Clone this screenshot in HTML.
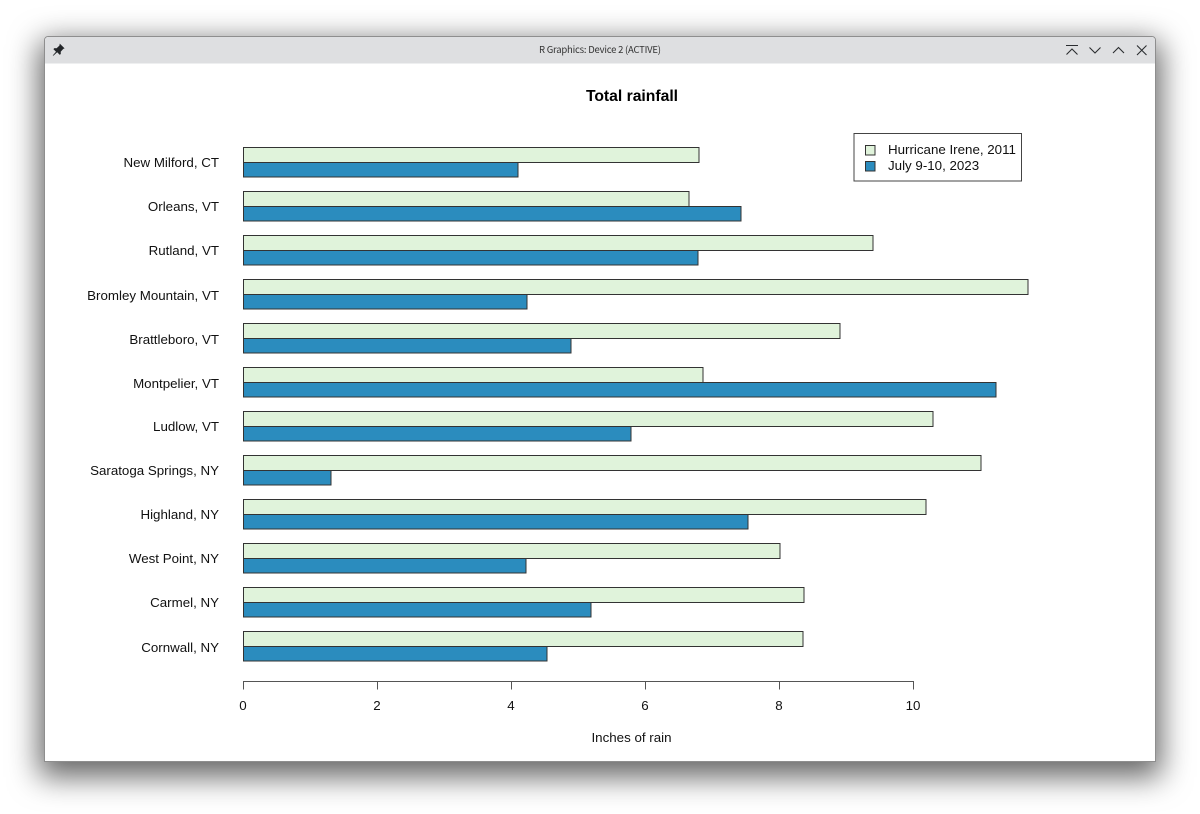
<!DOCTYPE html>
<html>
<head>
<meta charset="utf-8">
<style>
html,body{margin:0;padding:0;background:#fff;width:1200px;height:814px;overflow:hidden}
#win{position:absolute;left:44px;top:36px;width:1112px;height:726px;border-radius:4px 4px 0 0;box-shadow:0 10px 30px 5px rgba(0,0,0,.6)}
svg{position:absolute;left:0;top:0}
text{font-family:"Liberation Sans",sans-serif;fill:#111}
</style>
</head>
<body>
<div id="win"></div>
<svg width="1200" height="814" viewBox="0 0 1200 814">
<path d="M44.500 761.500V40a3.500 3.500 0 0 1 3.500-3.500H1152a3.500 3.500 0 0 1 3.500 3.500V761.500Z" fill="#fff" stroke="#8e8e8e"/>
<path d="M45 63.500V40.500a3.500 3.500 0 0 1 3.500-3.500H1151.500a3.500 3.500 0 0 1 3.500 3.500V63.500Z" fill="#dedfe1"/>
<!-- pin -->
<path d="M59.800 43.600l4.800 4.800-1.300.5-2.600 2.800.1 2.200-1 1-2.600-2.600-3.700 3.300-.8-.1 3.300-3.800-2.600-2.600 1-1 2.200.1 2.800-2.600z" fill="#232629"/>
<text x="539" y="53" font-size="9.500" style="font-family:'Noto Sans CJK JP',sans-serif;fill:#333" textLength="122">R Graphics: Device 2 (ACTIVE)</text>
<!-- window buttons -->
<g fill="none" stroke="#2a2d30" stroke-width="1.100">
<path d="M1066 45.500H1078M1066.500 54.500L1072 49L1077.500 54.500"/>
<path d="M1089.500 47.500L1095 53L1100.500 47.500"/>
<path d="M1113 53L1118.500 47.500L1124 53"/>
<path d="M1137 45.500L1146.500 55M1146.500 45.500L1137 55"/>
</g>
<text x="632" y="101" font-size="15.700" font-weight="bold" text-anchor="middle" style="fill:#000">Total rainfall</text>
<g stroke="#333" stroke-width="1">
<rect x="243.500" y="147.500" width="455.500" height="15" fill="#e0f3db"/><rect x="243.500" y="162.500" width="274.500" height="14.500" fill="#2b8cbe"/>
<rect x="243.500" y="191.500" width="445.500" height="15" fill="#e0f3db"/><rect x="243.500" y="206.500" width="497.500" height="14.500" fill="#2b8cbe"/>
<rect x="243.500" y="235.500" width="629.500" height="15" fill="#e0f3db"/><rect x="243.500" y="250.500" width="454.500" height="14.500" fill="#2b8cbe"/>
<rect x="243.500" y="279.500" width="784.500" height="15" fill="#e0f3db"/><rect x="243.500" y="294.500" width="283.500" height="14.500" fill="#2b8cbe"/>
<rect x="243.500" y="323.500" width="596.500" height="15" fill="#e0f3db"/><rect x="243.500" y="338.500" width="327.500" height="14.500" fill="#2b8cbe"/>
<rect x="243.500" y="367.500" width="459.500" height="15" fill="#e0f3db"/><rect x="243.500" y="382.500" width="752.500" height="14.500" fill="#2b8cbe"/>
<rect x="243.500" y="411.500" width="689.500" height="15" fill="#e0f3db"/><rect x="243.500" y="426.500" width="387.500" height="14.500" fill="#2b8cbe"/>
<rect x="243.500" y="455.500" width="737.500" height="15" fill="#e0f3db"/><rect x="243.500" y="470.500" width="87.500" height="14.500" fill="#2b8cbe"/>
<rect x="243.500" y="499.500" width="682.500" height="15" fill="#e0f3db"/><rect x="243.500" y="514.500" width="504.500" height="14.500" fill="#2b8cbe"/>
<rect x="243.500" y="543.500" width="536.500" height="15" fill="#e0f3db"/><rect x="243.500" y="558.500" width="282.500" height="14.500" fill="#2b8cbe"/>
<rect x="243.500" y="587.500" width="560.500" height="15" fill="#e0f3db"/><rect x="243.500" y="602.500" width="347.500" height="14.500" fill="#2b8cbe"/>
<rect x="243.500" y="631.500" width="559.500" height="15" fill="#e0f3db"/><rect x="243.500" y="646.500" width="303.500" height="14.500" fill="#2b8cbe"/>
</g>
<g font-size="13.330" text-anchor="end">
<text x="219" y="167">New Milford, CT</text>
<text x="219" y="211">Orleans, VT</text>
<text x="219" y="255">Rutland, VT</text>
<text x="219" y="300">Bromley Mountain, VT</text>
<text x="219" y="344">Brattleboro, VT</text>
<text x="219" y="388">Montpelier, VT</text>
<text x="219" y="431">Ludlow, VT</text>
<text x="219" y="475">Saratoga Springs, NY</text>
<text x="219" y="519">Highland, NY</text>
<text x="219" y="563">West Point, NY</text>
<text x="219" y="607">Carmel, NY</text>
<text x="219" y="652">Cornwall, NY</text>
</g>
<path d="M243.500 689.500V681.500H913.500V689.500M377.500 681.500V689.500M511.500 681.500V689.500M645.500 681.500V689.500M779.500 681.500V689.500" fill="none" stroke="#555" stroke-width="1"/>
<g font-size="13.330" text-anchor="middle">
<text x="243" y="710">0</text>
<text x="377" y="710">2</text>
<text x="511" y="710">4</text>
<text x="645" y="710">6</text>
<text x="779" y="710">8</text>
<text x="913" y="710">10</text>
</g>
<text x="631.500" y="742" font-size="13.330" text-anchor="middle">Inches of rain</text>
<rect x="854" y="133.500" width="167.500" height="47.500" fill="#fff" stroke="#444"/>
<rect x="865.500" y="145.500" width="9.500" height="9.500" fill="#e0f3db" stroke="#333"/>
<rect x="865.500" y="161.500" width="9.500" height="9.500" fill="#2b8cbe" stroke="#333"/>
<text x="888" y="154" font-size="13.330">Hurricane Irene, 2011</text>
<text x="888" y="170" font-size="13.330">July 9-10, 2023</text>
</svg>
</body>
</html>
